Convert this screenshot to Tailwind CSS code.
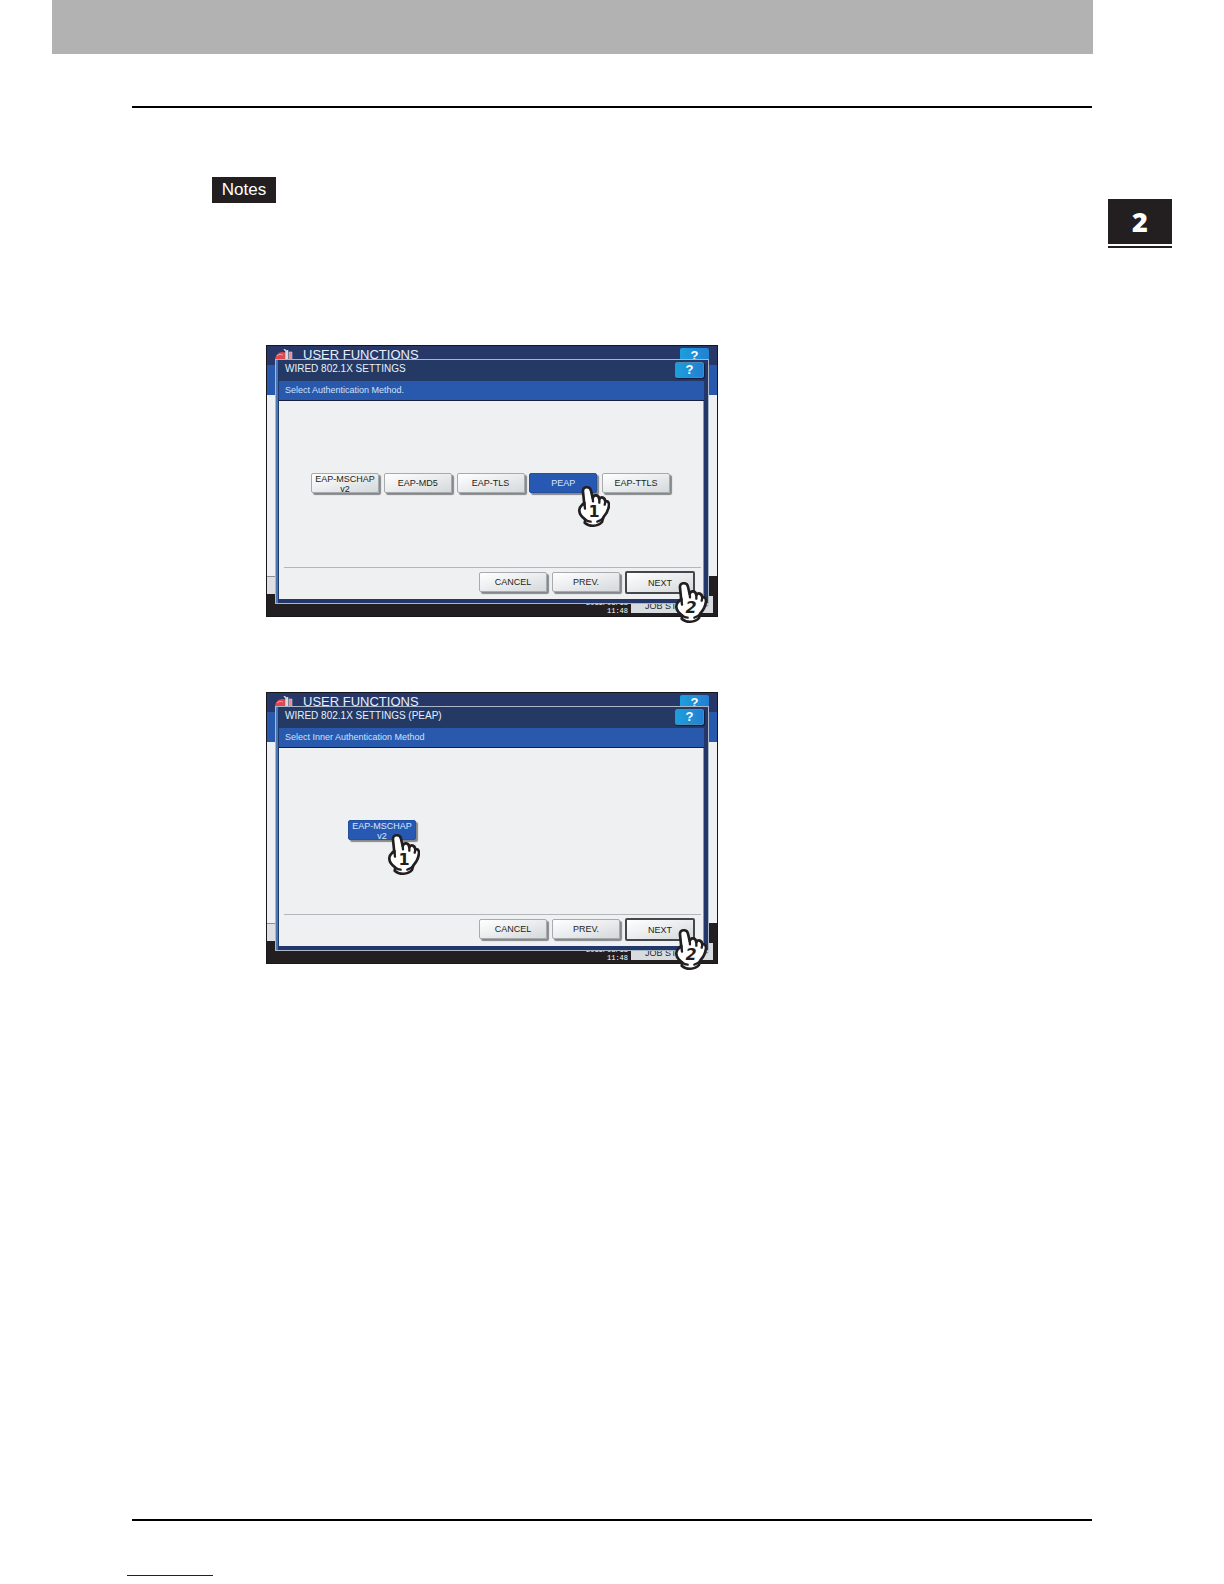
<!DOCTYPE html>
<html lang="en">
<head>
    <meta charset="UTF-8">
    <meta name="viewport" content="width=device-width, initial-scale=1.0">
    <title>Wired 802.1X Settings</title>
    <script src="https://cdn.jsdelivr.net/npm/@tailwindcss/browser@4"></script>
</head>
<body class="bg-white font-['Liberation_Sans',Arial,sans-serif] text-[#231f20]">

    <!-- Shared drawings -->
    <svg class="hidden">
        <symbol id="hand" viewBox="0 0 96 126">
            <path d="M19 56 L15 17 C13 0 36 0 39 14 L44 36 C48 24 62 26 64 40 C68 30 81 34 82 47 C90 42 95 52 92 63 C90 78 84 85 76 94 L72 108 C60 122 34 123 20 110 L22 101 C10 92 3 84 4 72 C4 62 12 58 19 50 Z" fill="#fff" stroke="#231f20" stroke-width="8" stroke-linejoin="round"/>
            <path d="M19 50 L21 68 M44 36 L45 46 M64 40 L64 50 M82 47 L80 56 M22 101 C28 106 34 107 38 107 M58 107 C66 105 72 101 76 95" fill="none" stroke="#231f20" stroke-width="7" stroke-linecap="round"/>
        </symbol>
        <symbol id="toolbox" viewBox="0 0 18 11">
            <path d="M0 11 C0 6 3 3 8 3 L12 4 V11 Z" fill="#e0474f"/>
            <path d="M2 7 C4 5 6 5 8 6" stroke="#f4a0a4" fill="none"/>
            <path d="M9 0 L11 2 V11 M12.5 1 V11" stroke="#d8d8e0" stroke-width="1.5" fill="none"/>
            <path d="M14 3 H17 V11 H14 Z" fill="#e98a8e" stroke="#c8ccd8" stroke-width=".6"/>
        </symbol>
    </svg>

    <div class="min-h-screen flex flex-col">
        <header class="h-[54px] ml-[52px] mr-[131px] bg-[#b2b2b2]"></header>

        <main class="flex pl-[132px] pr-[52px] pt-[52px]">
            <div class="flex-1 border-t-2 border-black pl-20">
                <h2 class="w-16 h-[26px] mt-[69px] bg-[#231f20] text-white text-[17px] leading-[26px] text-center">Notes</h2>

                <!-- Authentication method screen -->
                <section class="relative w-[452px] h-[272px] ml-[54px] mt-[142px] flex flex-col bg-[#231f20] border border-[#16161c]">
                    <div class="h-[19px] flex items-start justify-between bg-[#263768] pl-2 pr-2">
                        <div class="flex items-start gap-[10px]">
                            <svg class="w-[18px] h-[11px] mt-[3px]"><use href="#toolbox"/></svg>
                            <h3 class="text-[13px] leading-[18px] text-[#e4f0fc]">USER FUNCTIONS</h3>
                        </div>
                        <button class="w-[29px] h-4 mt-[2px] rounded-xs bg-gradient-to-r from-[#1c9fdc] to-[#237fd2] text-white text-[13px] leading-4 font-bold">?</button>
                    </div>
                    <div class="h-[30px] bg-[#2859ad]"></div>
                    <div class="h-[181px] bg-[#eff0f1]"></div>
                    <div class="flex-1 flex">
                        <div class="w-2 h-[18px] bg-[#dddfe0] border-t border-[#8d9092]"></div>
                        <div class="ml-auto mt-5 mr-1 flex">
                            <p class="font-['Liberation_Mono',monospace] text-[7px] leading-2 text-white text-right mt-[3px] mr-[3px]">2011/08/18<br>11:48</p>
                            <button class="w-[82px] h-[17px] bg-[#d9dcde] text-[9px] leading-[21px] flex justify-between pl-[14px] pr-1"><span>JOB ST</span><span class="text-[6px] leading-4 text-[#8d9092] self-end">▶</span></button>
                        </div>
                    </div>

                    <div class="absolute left-2 top-[13px] w-[434px] h-[245px] border border-[#a9b7c6] bg-[#24376b] pl-[3px] pr-1 pb-1 flex flex-col shadow-[inset_2px_0_0_#4778b0]">
                        <div class="h-[21px] flex justify-between bg-[#243963] pl-[6px]">
                            <h4 class="text-[10px] leading-[18px] text-[#e4f0fc]">WIRED 802.1X SETTINGS</h4>
                            <button class="w-[29px] h-4 mt-[2px] rounded-xs bg-gradient-to-r from-[#1c9fdc] to-[#237fd2] border border-[#4b8bb8] text-white text-[13px] leading-[14px] font-bold shadow-[1px_1px_1px_#111b40]">?</button>
                        </div>
                        <p class="h-5 bg-[#2859ad] border-b border-[#16203c] pl-[6px] text-[9px] leading-[18px] text-[#cfe2fa]">Select Authentication Method.</p>
                        <div class="flex-1 bg-[#eff0f1] border-r border-[#7f96c2] pl-[5px] pr-[2px] pb-[5px] flex flex-col">
                            <div class="flex justify-between pl-[27px] pr-[31px] mt-[72px] text-[9px] leading-[10px]">
                                <button class="w-[68px] h-5 rounded-xs border border-[#a6abae] bg-gradient-to-br from-white to-[#d5d9dc] shadow-[2px_2px_1px_#85888b]">EAP-MSCHAP<br>v2</button>
                                <button class="w-[68px] h-5 rounded-xs border border-[#a6abae] bg-gradient-to-br from-white to-[#d5d9dc] shadow-[2px_2px_1px_#85888b]">EAP-MD5</button>
                                <button class="w-[68px] h-5 rounded-xs border border-[#a6abae] bg-gradient-to-br from-white to-[#d5d9dc] shadow-[2px_2px_1px_#85888b]">EAP-TLS</button>
                                <button class="w-[68px] h-5 rounded-xs border border-[#2450a0] bg-[#2859b2] text-[#d8e8fc] shadow-[2px_2px_1px_#85888b]">PEAP</button>
                                <button class="w-[68px] h-5 rounded-xs border border-[#a6abae] bg-gradient-to-br from-white to-[#d5d9dc] shadow-[2px_2px_1px_#85888b]">EAP-TTLS</button>
                            </div>
                            <div class="mt-auto border-t border-[#b4b7ba] pt-[3px] pr-[6px] flex items-start justify-end gap-[5px] text-[9px] leading-[10px]">
                                <button class="w-[68px] h-5 mt-px rounded-xs border border-[#a6abae] bg-gradient-to-br from-white to-[#d5d9dc] shadow-[2px_2px_1px_#85888b]">CANCEL</button>
                                <button class="w-[68px] h-5 mt-px rounded-xs border border-[#a6abae] bg-gradient-to-br from-white to-[#d5d9dc] shadow-[2px_2px_1px_#85888b]">PREV.</button>
                                <button class="w-[70px] h-[23px] rounded-xs border-2 border-[#45484b] bg-gradient-to-br from-white to-[#d5d9dc]">NEXT</button>
                            </div>
                        </div>
                    </div>

                    <div class="absolute left-[311px] top-[140px] w-8 h-[42px]">
                        <svg class="w-8 h-[42px]"><use href="#hand"/></svg>
                        <span class="absolute inset-x-0 top-4 text-center font-['DejaVu_Sans',sans-serif] font-bold text-base leading-5">1</span>
                    </div>
                    <div class="absolute left-[408px] top-[236px] w-8 h-[42px]">
                        <svg class="w-8 h-[42px]"><use href="#hand"/></svg>
                        <span class="absolute inset-x-0 top-4 text-center font-['DejaVu_Sans',sans-serif] font-bold italic text-base leading-5">2</span>
                    </div>
                </section>

                <!-- Inner authentication method screen -->
                <section class="relative w-[452px] h-[272px] ml-[54px] mt-[75px] flex flex-col bg-[#231f20] border border-[#16161c]">
                    <div class="h-[19px] flex items-start justify-between bg-[#263768] pl-2 pr-2">
                        <div class="flex items-start gap-[10px]">
                            <svg class="w-[18px] h-[11px] mt-[3px]"><use href="#toolbox"/></svg>
                            <h3 class="text-[13px] leading-[18px] text-[#e4f0fc]">USER FUNCTIONS</h3>
                        </div>
                        <button class="w-[29px] h-4 mt-[2px] rounded-xs bg-gradient-to-r from-[#1c9fdc] to-[#237fd2] text-white text-[13px] leading-4 font-bold">?</button>
                    </div>
                    <div class="h-[30px] bg-[#2859ad]"></div>
                    <div class="h-[181px] bg-[#eff0f1]"></div>
                    <div class="flex-1 flex">
                        <div class="w-2 h-[18px] bg-[#dddfe0] border-t border-[#8d9092]"></div>
                        <div class="ml-auto mt-5 mr-1 flex">
                            <p class="font-['Liberation_Mono',monospace] text-[7px] leading-2 text-white text-right mt-[3px] mr-[3px]">2011/08/18<br>11:48</p>
                            <button class="w-[82px] h-[17px] bg-[#d9dcde] text-[9px] leading-[21px] flex justify-between pl-[14px] pr-1"><span>JOB ST</span><span class="text-[6px] leading-4 text-[#8d9092] self-end">▶</span></button>
                        </div>
                    </div>

                    <div class="absolute left-2 top-[13px] w-[434px] h-[245px] border border-[#a9b7c6] bg-[#24376b] pl-[3px] pr-1 pb-1 flex flex-col shadow-[inset_2px_0_0_#4778b0]">
                        <div class="h-[21px] flex justify-between bg-[#243963] pl-[6px]">
                            <h4 class="text-[10px] leading-[18px] text-[#e4f0fc]">WIRED 802.1X SETTINGS (PEAP)</h4>
                            <button class="w-[29px] h-4 mt-[2px] rounded-xs bg-gradient-to-r from-[#1c9fdc] to-[#237fd2] border border-[#4b8bb8] text-white text-[13px] leading-[14px] font-bold shadow-[1px_1px_1px_#111b40]">?</button>
                        </div>
                        <p class="h-5 bg-[#2859ad] border-b border-[#16203c] pl-[6px] text-[9px] leading-[18px] text-[#cfe2fa]">Select Inner Authentication Method</p>
                        <div class="flex-1 bg-[#eff0f1] border-r border-[#7f96c2] pl-[5px] pr-[2px] pb-[5px] flex flex-col">
                            <div class="flex pl-16 mt-[72px] text-[9px] leading-[10px]">
                                <button class="w-[68px] h-5 rounded-xs border border-[#2450a0] bg-[#2859b2] text-[#d8e8fc] shadow-[2px_2px_1px_#85888b]">EAP-MSCHAP<br>v2</button>
                            </div>
                            <div class="mt-auto border-t border-[#b4b7ba] pt-[3px] pr-[6px] flex items-start justify-end gap-[5px] text-[9px] leading-[10px]">
                                <button class="w-[68px] h-5 mt-px rounded-xs border border-[#a6abae] bg-gradient-to-br from-white to-[#d5d9dc] shadow-[2px_2px_1px_#85888b]">CANCEL</button>
                                <button class="w-[68px] h-5 mt-px rounded-xs border border-[#a6abae] bg-gradient-to-br from-white to-[#d5d9dc] shadow-[2px_2px_1px_#85888b]">PREV.</button>
                                <button class="w-[70px] h-[23px] rounded-xs border-2 border-[#45484b] bg-gradient-to-br from-white to-[#d5d9dc]">NEXT</button>
                            </div>
                        </div>
                    </div>

                    <div class="absolute left-[121px] top-[141px] w-8 h-[42px]">
                        <svg class="w-8 h-[42px]"><use href="#hand"/></svg>
                        <span class="absolute inset-x-0 top-4 text-center font-['DejaVu_Sans',sans-serif] font-bold text-base leading-5">1</span>
                    </div>
                    <div class="absolute left-[408px] top-[236px] w-8 h-[42px]">
                        <svg class="w-8 h-[42px]"><use href="#hand"/></svg>
                        <span class="absolute inset-x-0 top-4 text-center font-['DejaVu_Sans',sans-serif] font-bold italic text-base leading-5">2</span>
                    </div>
                </section>
            </div>

            <!-- Chapter tab -->
            <aside class="w-16 ml-4 mt-[93px]">
                <div class="h-[45px] bg-[#231f20] text-white text-center font-['Open_Sans',sans-serif] font-extrabold text-[27px] leading-[46px]">2</div>
                <div class="h-[2px] mt-[2px] bg-[#231f20]"></div>
            </aside>
        </main>

        <footer class="mt-auto pl-[127px] pr-[132px] pb-2">
            <div class="ml-[5px] h-[2px] bg-black"></div>
            <div class="mt-[54px] w-[86px] h-px bg-[#14148c]"></div>
        </footer>
    </div>

</body>
</html>
